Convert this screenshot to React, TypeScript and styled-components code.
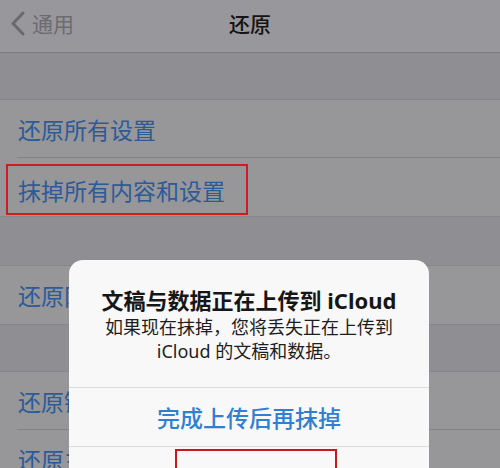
import React from 'react';
import styled, { createGlobalStyle } from 'styled-components';

const GlobalStyle = createGlobalStyle`
	html, body {
		margin: 0;
		padding: 0;
		background: #8f8e93;
	}
	body {
		font-family: "Noto Sans", "Noto Sans CJK SC", sans-serif;
	}
`;

const Screen = styled.div`
	position: relative;
	width: 500px;
	height: 468px;
	overflow: hidden;
	background: #8f8e93;
`;

const NavBar = styled.div`
	height: 52px;
	display: grid;
	grid-template-columns: 1fr auto 1fr;
	align-items: center;
	background: #98979b;
	border-bottom: 1px solid #7d7c81;
`;

const Back = styled.div`
	display: flex;
	align-items: center;
	gap: 7px;
	padding-left: 10px;
	color: #6c6b70;
	font-size: 21px;
	margin-top: -6px;
`;

const Title = styled.div`
	font-size: 21px;
	font-weight: 500;
	color: #141414;
	margin-top: -6px;
`;

const SectionGap = styled.div<{ $h: number }>`
	height: ${p => p.$h}px;
	background: #8f8e93;
`;

const Group = styled.div`
	background: #979699;
	border-top: 1px solid #86858a;
	border-bottom: 1px solid #86858a;
`;

const Row = styled.div<{ $sep?: boolean }>`
	height: 58px;
	display: flex;
	align-items: center;
	padding-left: 18px;
	font-size: 23px;
	color: #2c5b98;
	position: relative;
	${p =>
		p.$sep &&
		`
		&::after {
			content: '';
			position: absolute;
			left: 17px;
			right: 0;
			bottom: 0;
			height: 1px;
			background: #838287;
		}
	`}
`;

const Highlight = styled.span`
	display: inline-flex;
	align-items: center;
	height: 47px;
	margin: 5px 0 0 -12px;
	padding: 0 21px 0 10px;
	border: 2px solid #d01c1c;
`;

const Dialog = styled.div`
	position: absolute;
	left: 69px;
	top: 260px;
	width: 360px;
	background: #f8f8f9;
	border-radius: 14px;
	overflow: hidden;
	text-align: center;
`;

const DialogBody = styled.div`
	padding: 25px 16px 24px;
`;

const DialogTitle = styled.div`
	font-size: 22px;
	font-weight: 700;
	line-height: 30px;
	color: #161616;
`;

const DialogMessage = styled.div`
	font-size: 18px;
	line-height: 24px;
	color: #1e1e1e;
`;

const DialogButton = styled.div`
	height: 58px;
	display: flex;
	align-items: center;
	justify-content: center;
	border-top: 1px solid #dcdcdf;
	font-size: 23px;
	font-weight: 500;
	color: #2f7fd2;
`;

const ButtonMark = styled.span`
	display: flex;
	align-items: center;
	align-self: flex-start;
	height: 56px;
	margin: 2px 0 0 14px;
	padding: 8px 38px 0 28px;
	border: 2px solid #c81818;
	box-sizing: border-box;
`;

export default function App() {
	return (
		<Screen>
			<GlobalStyle />
			<NavBar>
				<Back>
					<svg width="15" height="25" viewBox="0 0 15 25">
						<polyline
							points="13,2 3,12.5 13,23"
							fill="none"
							stroke="#6a696e"
							strokeWidth="3"
							strokeLinecap="round"
							strokeLinejoin="round"
						/>
					</svg>
					<span>通用</span>
				</Back>
				<Title>还原</Title>
				<div />
			</NavBar>
			<SectionGap $h={46} />
			<Group>
				<Row $sep>还原所有设置</Row>
				<Row>
					<Highlight>抹掉所有内容和设置</Highlight>
				</Row>
			</Group>
			<SectionGap $h={48} />
			<Group>
				<Row>还原网络设置</Row>
			</Group>
			<SectionGap $h={46} />
			<Group>
				<Row $sep>还原键盘字典</Row>
				<Row>还原主屏幕布局</Row>
			</Group>
			<Dialog>
				<DialogBody>
					<DialogTitle>文稿与数据正在上传到 iCloud</DialogTitle>
					<DialogMessage>
						如果现在抹掉，您将丢失正在上传到
						<br />
						iCloud 的文稿和数据。
					</DialogMessage>
				</DialogBody>
				<DialogButton>完成上传后再抹掉</DialogButton>
				<DialogButton>
					<ButtonMark>立即抹掉</ButtonMark>
				</DialogButton>
			</Dialog>
		</Screen>
	);
}
